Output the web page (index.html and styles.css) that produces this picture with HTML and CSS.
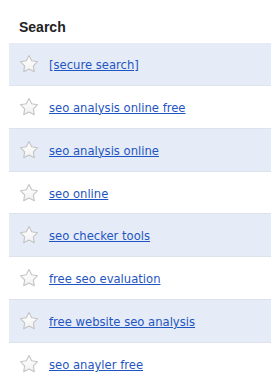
FILE: index.html
```html
<!DOCTYPE html>
<html lang="en">
<head>
  <meta charset="UTF-8" />
  <title>Search</title>
  <link rel="stylesheet" href="styles.css">
</head>
<body>
  <svg width="0" height="0" class="defs">
    <defs>
      <linearGradient id="starFill" x1="0" y1="0" x2="0" y2="1">
        <stop offset="0" stop-color="#ffffff" />
        <stop offset="1" stop-color="#f1f1f1" />
      </linearGradient>
      <symbol id="star" viewBox="0 0 20 20">
        <polygon points="10,1.5 12.7,6.78 18.56,7.72 14.37,11.92 15.29,17.78 10,15.1 4.71,17.78 5.63,11.92 1.44,7.72 7.3,6.78" fill="url(#starFill)" stroke="#c4c4c4" stroke-width="1.1" stroke-linejoin="round" />
      </symbol>
    </defs>
  </svg>

  <section class="panel">
    <h3>Search</h3>
    <ul class="results">
      <li class="alt"><svg class="star"><use href="#star" /></svg><a href="#">[secure search]</a></li>
      <li><svg class="star"><use href="#star" /></svg><a href="#">seo analysis online free</a></li>
      <li class="alt"><svg class="star"><use href="#star" /></svg><a href="#">seo analysis online</a></li>
      <li><svg class="star"><use href="#star" /></svg><a href="#">seo online</a></li>
      <li class="alt"><svg class="star"><use href="#star" /></svg><a href="#">seo checker tools</a></li>
      <li><svg class="star"><use href="#star" /></svg><a href="#">free seo evaluation</a></li>
      <li class="alt"><svg class="star"><use href="#star" /></svg><a href="#">free website seo analysis</a></li>
      <li><svg class="star"><use href="#star" /></svg><a href="#">seo anayler free</a></li>
    </ul>
  </section>
</body>
</html>
```

FILE: styles.css
```css
* {
  margin: 0;
  padding: 0;
  box-sizing: border-box;
}

body {
  background: #ffffff;
  font-family: 'DejaVu Sans', Verdana, sans-serif;
  overflow: hidden;
}

.defs {
  position: absolute;
}

.panel {
  padding-left: 9px;
}

.panel h3 {
  font-family: 'Liberation Sans', Arial, sans-serif;
  font-size: 14px;
  font-weight: bold;
  color: #222;
  padding: 19px 0 0 10px;
  height: 43px;
}

.results {
  list-style: none;
}

.results li {
  height: 42.86px;
  display: flex;
  align-items: center;
  padding-left: 10px;
  gap: 10px;
  border-bottom: 1px solid #dde3ee;
}

.results li.alt {
  background: #e5ecf7;
}

.star {
  width: 20px;
  height: 20px;
  flex: none;
}

.results a {
  color: #1f55c2;
  font-size: 11.6px;
  text-decoration: underline;
  padding-top: 2px;
}
```
